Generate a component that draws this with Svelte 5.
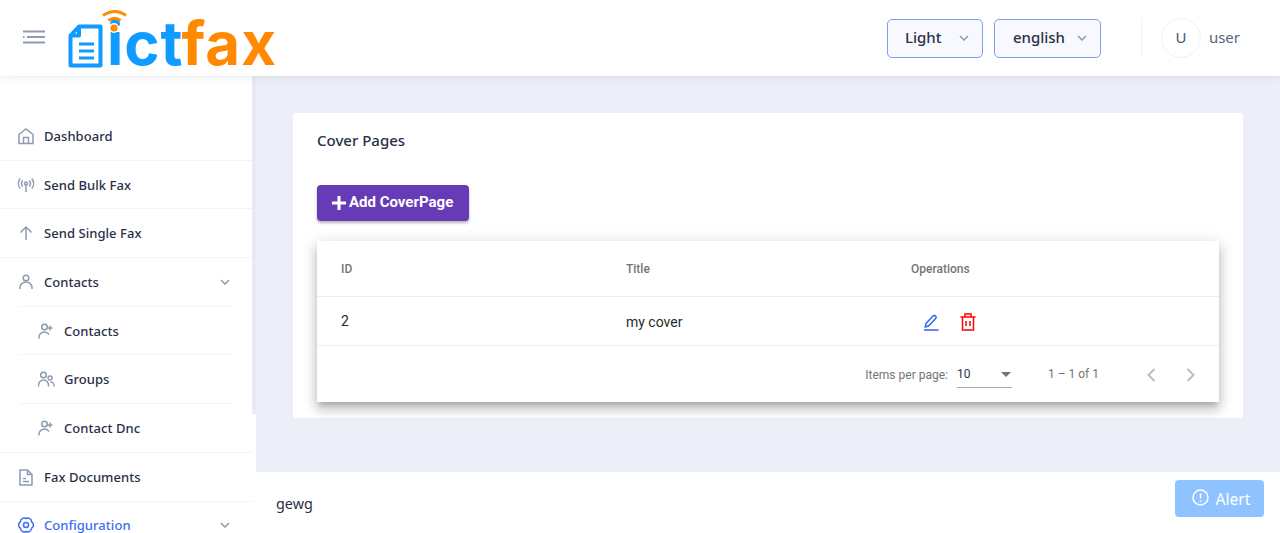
<script>
  const menu = [
    { label: 'Dashboard', icon: 'home' },
    { label: 'Send Bulk Fax', icon: 'antenna' },
    { label: 'Send Single Fax', icon: 'up' },
    { label: 'Contacts', icon: 'user', open: true },
    { label: 'Contacts', icon: 'userplus', sub: true },
    { label: 'Groups', icon: 'users', sub: true },
    { label: 'Contact Dnc', icon: 'userplus', sub: true, last: true },
    { label: 'Fax Documents', icon: 'doc' },
    { label: 'Configuration', icon: 'gear', open: true, active: true }
  ];
</script>

<div class="page">
  <header class="topbar">
    <div class="brand">
      <svg class="burger" width="22" height="14" viewBox="0 0 22 14">
        <path d="M0 1.500h22M4 7h18M0 12.500h22M0 7h1.500" />
      </svg>
      <div class="logo">
        <svg class="logo-mark" width="60" height="62" viewBox="0 0 60 62">
          <path class="doc" d="M11 19.500h21.500v39h-30v-30z" />
          <path class="doc" d="M11 19.500v9h-8.500" />
          <path class="doc-lines" d="M11 37h15M11 44h15M11 51h15" />
          <path class="wave" d="M35 8.500q12-8 23 0M40.500 13.500q6.500-4.500 12 0" />
          <circle class="wave-dot" cx="46" cy="21" r="4.300" />
        </svg>
        <span class="logo-text"><span class="blue">ict</span><span class="orange">fax</span></span>
      </div>
    </div>
    <div class="tools">
      <button class="pick pick-theme">Light
        <svg width="10" height="6" viewBox="0 0 10 6"><path d="M1 1l4 4 4-4" /></svg>
      </button>
      <button class="pick pick-lang">english
        <svg width="10" height="6" viewBox="0 0 10 6"><path d="M1 1l4 4 4-4" /></svg>
      </button>
      <div class="sep"></div>
      <div class="avatar">U</div>
      <span class="username">user</span>
    </div>
  </header>

  <div class="body">
    <aside class="sidebar">
      <div class="thumb"></div>
      <ul>
        {#each menu as item}
          <li class:sub={item.sub} class:inset={item.open && !item.active || (item.sub && !item.last)} class:active={item.active}>
            <svg class="icon" width="18" height="18" viewBox="0 0 18 18">
              {#if item.icon === 'home'}
                <path d="M2 16.500v-9L9 2l7 5.500v9zM6.500 16.500v-6h5v6" />
              {:else if item.icon === 'antenna'}
                <circle cx="9" cy="7.500" r="1.500" />
                <path d="M9 9v7M5.800 4.500a4.500 4.500 0 0 0 0 6M12.200 4.500a4.500 4.500 0 0 1 0 6M3.200 2.500a8 8 0 0 0 0 10M14.800 2.500a8 8 0 0 1 0 10" />
              {:else if item.icon === 'up'}
                <path d="M9 16V3M3.500 8.500L9 3l5.500 5.500" />
              {:else if item.icon === 'user'}
                <circle cx="9" cy="5" r="2.800" />
                <path d="M3 16v-1.500a6 5.500 0 0 1 12 0V16" />
              {:else if item.icon === 'userplus'}
                <circle cx="7.500" cy="5" r="2.800" />
                <path d="M2 16.500V15a5.500 5.500 0 0 1 10 -2.500M13 3.500v5M10.500 6h5" />
              {:else if item.icon === 'users'}
                <circle cx="6.500" cy="5" r="2.800" />
                <circle cx="13" cy="8" r="2" />
                <path d="M1.500 16.500V15a5 5 0 0 1 10 0v1.500M13.500 12a3.500 3.500 0 0 1 3.500 3.500v1" />
              {:else if item.icon === 'doc'}
                <path d="M3 2h7.500L15 6.500V17H3zM10.500 2v4.500H15M6 10.500h3M6 13.500h6" />
              {:else}
                <circle cx="9" cy="9" r="2.500" />
                <path d="M9 2.500a3.800 3.800 0 0 1 5.600 3.250 3.800 3.800 0 0 1 0 6.500A3.800 3.800 0 0 1 9 15.500a3.800 3.800 0 0 1-5.600-3.250 3.800 3.800 0 0 1 0-6.500A3.800 3.800 0 0 1 9 2.500z" />
              {/if}
            </svg>
            <span class="label">{item.label}</span>
            {#if item.open}
              <svg class="caret" width="10" height="6" viewBox="0 0 10 6"><path d="M1 1l4 4 4-4" /></svg>
            {/if}
          </li>
        {/each}
      </ul>
    </aside>

    <div class="right">
      <main class="main">
        <section class="card">
          <h2>Cover Pages</h2>
          <button class="add">
            <svg width="14" height="14" viewBox="0 0 14 14"><path d="M7 0v14M0 7h14" /></svg>
            Add CoverPage
          </button>
          <div class="table">
            <div class="row head">
              <div>ID</div>
              <div>Title</div>
              <div>Operations</div>
            </div>
            <div class="row item">
              <div>2</div>
              <div class="name">my cover</div>
              <div class="ops">
                <svg width="16" height="17" viewBox="0 0 16 17" class="edit">
                  <path d="M1 16h14.500M3 9.500l7-7.500a1.800 1.800 0 0 1 3 .5 2 2 0 0 1-.3 2L5.500 12l-3.200 1z" />
                </svg>
                <svg width="16" height="18" viewBox="0 0 16 18" class="trash">
                  <path d="M.5 4h15M5 4V1h6v3M2.500 4v13h11V4M6 8v5M10 8v5" />
                </svg>
              </div>
            </div>
            <div class="pager">
              <span class="per">Items per page:</span>
              <div class="size"><span>10</span><i></i></div>
              <span class="range">1 – 1 of 1</span>
              <button class="nav" aria-label="Previous">
                <svg width="12" height="16" viewBox="0 0 12 16"><path d="M9.500 2L3.500 8l6 6" /></svg>
              </button>
              <button class="nav" aria-label="Next">
                <svg width="12" height="16" viewBox="0 0 12 16"><path d="M2.500 2l6 6-6 6" /></svg>
              </button>
            </div>
          </div>
        </section>
      </main>
      <footer class="foot">
        <span>gewg</span>
        <button class="alert">
          <svg width="17" height="17" viewBox="0 0 17 17">
            <circle cx="8.500" cy="8.500" r="7.500" />
            <path d="M8.500 4.500v5M8.500 11.500v1.500" />
          </svg>
          Alert
        </button>
      </footer>
    </div>
  </div>
</div>

<style>
  :global(body) {
    margin: 0;
    background: #eceff7;
  }

  .page {
    height: 533px;
    overflow: hidden;
    display: flex;
    flex-direction: column;
    font-family: "Noto Sans", sans-serif;
    color: #2a3047;
  }

  button {
    font-family: inherit;
  }

  .topbar {
    height: 76px;
    flex: none;
    display: flex;
    justify-content: space-between;
    background: #fff;
    box-shadow: 0 1px 8px rgba(60, 70, 110, 0.12);
    position: relative;
    z-index: 2;
  }

  .brand {
    display: flex;
    align-items: flex-start;
    padding-left: 23px;
  }

  .burger {
    margin-top: 30px;
    fill: none;
    stroke: #8f9ab3;
    stroke-width: 2;
  }

  .logo {
    position: relative;
    margin-left: 62px;
    margin-top: 9px;
  }

  .logo-mark {
    position: absolute;
    left: -39px;
    top: -2px;
    z-index: 1;
  }

  .doc {
    fill: none;
    stroke: #0f9bff;
    stroke-width: 4;
    stroke-linejoin: round;
  }

  .doc-lines {
    stroke: #0f9bff;
    stroke-width: 3;
  }

  .wave {
    fill: none;
    stroke: #ff8a00;
    stroke-width: 3;
  }

  .wave-dot {
    fill: #ff8a00;
    stroke: #fff;
    stroke-width: 1.500;
  }

  .logo-text {
    display: block;
    font-family: "Inter", sans-serif;
    font-size: 60px;
    font-weight: 700;
    line-height: 68px;
    letter-spacing: 1px;
    white-space: nowrap;
  }

  .blue {
    color: #0f9bff;
  }

  .orange {
    color: #ff8a00;
  }

  .tools {
    display: flex;
    align-items: flex-start;
    height: 40px;
    margin-top: 18px;
    padding-right: 40px;
  }

  .pick {
    height: 39px;
    margin-top: 1px;
    display: flex;
    align-items: center;
    justify-content: space-between;
    background: #f8f9fe;
    border: 1px solid #7f9ef5;
    border-radius: 5px;
    font-size: 15px;
    font-weight: 500;
    color: #2a3047;
    padding: 0 13px 3px 17px;
  }

  .pick svg {
    fill: none;
    stroke: #8f9ab3;
    stroke-width: 1.500;
    margin-top: 2px;
  }

  .pick-theme {
    width: 96px;
    margin-right: 11px;
  }

  .pick-lang {
    width: 107px;
    padding-left: 18px;
  }

  .sep {
    width: 1px;
    height: 40px;
    background: #f2f3f7;
    margin: 0 19px 0 40px;
  }

  .avatar {
    width: 38px;
    height: 36px;
    padding-bottom: 2px;
    border: 1px solid #f0f1f5;
    border-radius: 50%;
    display: flex;
    align-items: center;
    justify-content: center;
    font-size: 15px;
    color: #4a5470;
  }

  .username {
    margin-left: 8px;
    font-size: 15px;
    line-height: 38px;
    color: #5a6478;
  }

  .body {
    flex: 1;
    min-height: 0;
    display: flex;
  }

  .sidebar {
    width: 256px;
    flex: none;
    background: #fff;
    position: relative;
    overflow: hidden;
  }

  .thumb {
    position: absolute;
    right: 0;
    top: 0;
    width: 4px;
    height: 338px;
    background: #e6eaf4;
  }

  ul {
    list-style: none;
    margin: 0;
    padding: 36px 4px 0 0;
  }

  li {
    position: relative;
    height: 47.700px;
    display: flex;
    align-items: center;
    padding: 0 20px 0 17px;
    border-bottom: 1px solid #f3f4f8;
    font-size: 13px;
    font-weight: 500;
    letter-spacing: 0.050px;
  }

  li.inset,
  li.sub {
    border-bottom-color: transparent;
  }

  li.inset::after {
    content: "";
    position: absolute;
    left: 20px;
    right: 20px;
    bottom: -1px;
    height: 1px;
    background: #f3f4f8;
  }

  li.sub {
    padding-left: 37px;
  }

  li.sub:has(+ li:not(.sub)) {
    border-bottom-color: #f3f4f8;
  }

  .icon {
    flex: none;
    margin-right: 9px;
    fill: none;
    stroke: #8f9ab3;
    stroke-width: 1.500;
  }

  .label {
    flex: 1;
  }

  .caret {
    margin-right: 2px;
    fill: none;
    stroke: #8f9ab3;
    stroke-width: 1.500;
  }

  li.active .label {
    color: #3d6df2;
  }

  li.active .icon {
    stroke: #3d6df2;
  }

  .right {
    flex: 1;
    min-width: 0;
    display: flex;
    flex-direction: column;
  }

  .main {
    flex: 1;
    min-height: 0;
    padding: 37px 37px 0;
  }

  .card {
    background: #fff;
    border-radius: 3px;
    height: 305px;
    box-sizing: border-box;
    padding: 17px 24px 0;
  }

  h2 {
    margin: 0;
    font-size: 15px;
    font-weight: 500;
    line-height: 20px;
    color: #2a3047;
  }

  .add {
    display: flex;
    align-items: center;
    gap: 3px;
    height: 36px;
    margin-top: 35px;
    padding: 0 16px 2px 15px;
    background: #673ab7;
    color: #fff;
    border: 0;
    border-radius: 4px;
    font-family: Roboto, sans-serif;
    font-size: 15px;
    font-weight: 700;
    box-shadow: 0 2px 3px rgba(0, 0, 0, 0.3);
  }

  .add svg {
    margin-top: 2px;
    fill: none;
    stroke: #fff;
    stroke-width: 3;
  }

  .table {
    margin-top: 20px;
    background: #fff;
    font-family: Roboto, sans-serif;
    box-shadow: 0 5px 5px -3px rgba(0, 0, 0, 0.2), 0 8px 10px 1px rgba(0, 0, 0, 0.14), 0 3px 14px 2px rgba(0, 0, 0, 0.12);
  }

  .row {
    display: grid;
    grid-template-columns: 285px 285px 1fr;
    align-items: center;
    padding-left: 24px;
    border-bottom: 1px solid #eeeeee;
  }

  .head {
    height: 55px;
    font-size: 12px;
    font-weight: 500;
    color: #757575;
  }

  .item {
    height: 48px;
    font-size: 14px;
    font-weight: 400;
    color: #2a2a2a;
  }

  .name {
    margin-top: 1px;
  }

  .ops {
    display: flex;
    align-items: center;
    gap: 21px;
    padding-left: 12px;
    margin-top: 2px;
  }

  .ops svg {
    fill: none;
    stroke-width: 1.500;
  }

  .edit {
    stroke: #2f64f0;
  }

  .trash {
    stroke: #ff0000;
  }

  .pager {
    height: 56px;
    box-sizing: border-box;
    padding: 1px 8px 0 0;
    display: flex;
    align-items: center;
    justify-content: flex-end;
    font-size: 12px;
    color: #757575;
  }

  .per {
    margin-top: 1px;
  }

  .size {
    width: 55px;
    height: 26px;
    margin: 0 0 0 9px;
    box-sizing: border-box;
    border-bottom: 1px solid #a8a8a8;
    display: flex;
    align-items: center;
    justify-content: space-between;
    color: #2a3047;
    padding-right: 1px;
  }

  .size i {
    width: 0;
    height: 0;
    border-left: 5px solid transparent;
    border-right: 5px solid transparent;
    border-top: 5px solid #757575;
  }

  .range {
    margin: -2px 32px 0 36px;
  }

  .nav {
    width: 40px;
    height: 40px;
    display: flex;
    align-items: center;
    justify-content: center;
    background: none;
    border: 0;
    padding: 0;
  }

  .nav svg {
    fill: none;
    stroke: #bdbdbd;
    stroke-width: 2;
  }

  .foot {
    height: 61px;
    flex: none;
    background: #fff;
    position: relative;
    display: flex;
    align-items: center;
    padding: 2px 0 0 20px;
    box-sizing: border-box;
    font-size: 14.400px;
    color: #2a3047;
  }

  .alert {
    position: absolute;
    right: 16px;
    top: 8px;
    width: 89px;
    height: 37px;
    display: flex;
    align-items: center;
    justify-content: center;
    gap: 7px;
    background: #8fc3ff;
    color: #fff;
    border: 0;
    border-radius: 4px;
    font-size: 15.600px;
    padding: 0 0 0 3px;
  }

  .alert svg {
    fill: none;
    stroke: #fff;
    stroke-width: 1.500;
    margin-top: -2px;
  }
</style>
